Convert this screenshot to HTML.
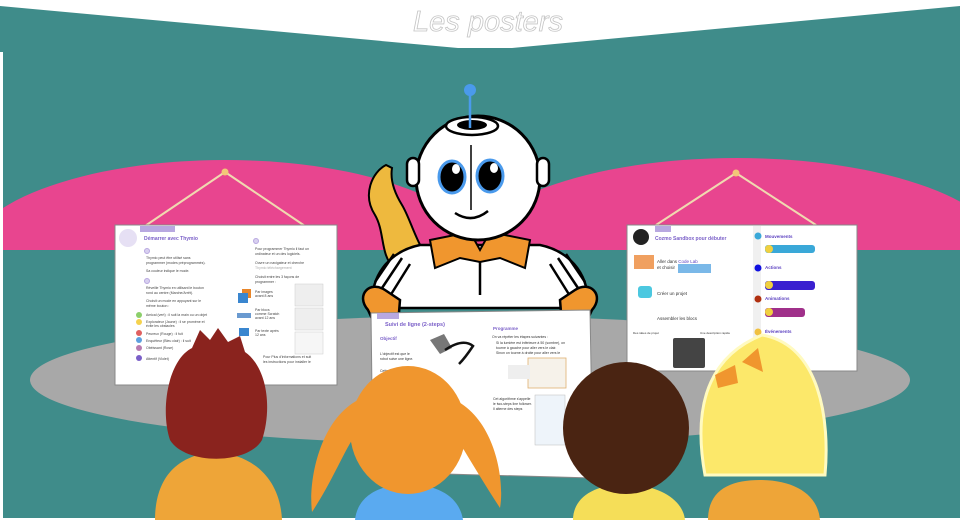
<!DOCTYPE html>
<html><head><meta charset="utf-8"><style>
html,body{margin:0;padding:0;background:#fff;width:960px;height:525px;overflow:hidden}
svg{display:block}
text{font-family:"Liberation Sans",sans-serif}
</style></head><body>
<svg width="960" height="525" viewBox="0 0 960 525" xmlns="http://www.w3.org/2000/svg">
<rect width="960" height="525" fill="#fff"/>
<polygon points="0,6 458,48 512,48 960,6 960,518 3,518 3,52 0,52" fill="#3f8c8a"/>
<text x="488" y="31" text-anchor="middle" font-family="DejaVu Serif,serif" font-style="italic" font-size="29" fill="#fff" stroke="#c4c4c4" stroke-width="0.8">Les posters</text>
<clipPath id="c1"><rect x="3" y="0" width="957" height="250"/></clipPath>
<g clip-path="url(#c1)" fill="#e8458f">
<ellipse cx="225" cy="260" rx="260" ry="100"/>
<ellipse cx="737" cy="258" rx="270" ry="100"/>
</g>
<ellipse cx="470" cy="380" rx="440" ry="64" fill="#a8a8a8"/>
<g stroke="#f0d9b0" stroke-width="2" fill="none">
<polyline points="145,226 225,172 305,226"/>
<polyline points="656,225 736,173 816,225"/>
</g>
<circle cx="225" cy="172" r="3.5" fill="#f2c878"/><circle cx="736" cy="173" r="3.5" fill="#f2c878"/>
<!-- left poster -->
<rect x="115" y="225" width="222" height="160" fill="#fff" stroke="#888" stroke-width="1"/>
<rect x="140" y="226" width="35" height="6" fill="#b8a8e0"/>
<circle cx="128" cy="238" r="9" fill="#e6e0f4"/>
<text x="144" y="240" font-size="5" fill="#7a5fc8" font-weight="bold">Démarrer avec Thymio</text>
<g font-size="3.5" fill="#444">
<text x="146" y="259">Thymio peut être utilisé sans</text><text x="146" y="264">programmer (modes préprogrammés).</text>
<text x="146" y="272">Sa couleur indique le mode.</text>
<text x="146" y="289">Réveille Thymio en utilisant le bouton</text><text x="146" y="294">rond au centre (Marche/Arrêt).</text>
<text x="146" y="302">Choisit un mode en appuyant sur le</text><text x="146" y="307">même bouton :</text>
<text x="146" y="316">Amical (vert) : il suit la main ou un objet</text>
<text x="146" y="323">Explorateur (Jaune) : il se promène et</text><text x="146" y="327">évite les obstacles</text>
<text x="146" y="335">Peureux (Rouge) : il fuit</text><text x="146" y="342">Enquêteur (Bleu clair) : il suit</text><text x="146" y="349">Obéissant (Rose)</text><text x="146" y="360">Attentif (Violet)</text>
<text x="255" y="250">Pour programmer Thymio il faut un</text><text x="255" y="255">ordinateur et un des logiciels.</text>
<text x="255" y="264">Ouvre un navigateur et cherche</text><text x="255" y="269" fill="#aaa">Thymio téléchargement</text>
<text x="255" y="278">Choisit entre les 3 façons de</text><text x="255" y="283">programmer :</text>
<text x="255" y="293">Par images</text><text x="255" y="297">avant 8 ans</text><text x="255" y="311">Par blocs</text><text x="255" y="315">comme Scratch</text><text x="255" y="319">avant 12 ans</text><text x="255" y="332">Par texte après</text><text x="255" y="336">12 ans</text><text x="263" y="358">Pour Plus d'informations et suit</text><text x="263" y="363">les instructions pour installer le</text>
</g>
<g stroke="#b8a8e0" stroke-width="1" fill="#d8d0f0"><circle cx="147" cy="251" r="2.5"/><circle cx="147" cy="281" r="2.5"/><circle cx="256" cy="241" r="2.5"/></g>
<g><circle cx="139" cy="315" r="3" fill="#8ccf6b"/><circle cx="139" cy="322" r="3" fill="#f5d24e"/><circle cx="139" cy="333" r="3" fill="#e06060"/><circle cx="139" cy="340" r="3" fill="#5da0e0"/><circle cx="139" cy="348" r="3" fill="#b87bb0"/><circle cx="139" cy="358" r="3" fill="#7a5fc8"/></g>
<rect x="242" y="289" width="9" height="9" fill="#e8862a"/><rect x="238" y="293" width="10" height="10" fill="#3a86cf"/>
<rect x="237" y="313" width="14" height="5" fill="#6a9ad0"/><rect x="239" y="328" width="10" height="8" fill="#3a86cf"/>
<rect x="295" y="284" width="28" height="22" fill="#eee" stroke="#ccc" stroke-width=".5"/><rect x="295" y="308" width="28" height="22" fill="#eee" stroke="#ccc" stroke-width=".5"/><rect x="295" y="332" width="28" height="22" fill="#f6f6f6" stroke="#ccc" stroke-width=".5"/>
<!-- right poster -->
<rect x="627" y="225" width="230" height="146" fill="#fff" stroke="#888" stroke-width="1"/>
<rect x="753" y="226" width="8" height="144" fill="#f0f0f0"/>
<rect x="655" y="226" width="16" height="6" fill="#b8a8e0"/>
<circle cx="641" cy="237" r="8" fill="#222"/>
<text x="655" y="240" font-size="5" fill="#7a5fc8" font-weight="bold">Cozmo Sandbox pour débuter</text>
<rect x="634" y="255" width="20" height="14" fill="#f0a060"/>
<g font-size="4.5" fill="#333"><text x="657" y="263">Aller dans <tspan fill="#5a3fc0">Code Lab</tspan></text><text x="657" y="269">et choisir</text><text x="657" y="295">Créer un projet</text><text x="657" y="320">Assembler les blocs</text><text x="633" y="334" font-size="3">Des idées de projet</text><text x="700" y="334" font-size="3">Une description rapide</text></g>
<rect x="678" y="264" width="33" height="9" fill="#7ab8e8"/>
<rect x="638" y="286" width="14" height="12" rx="3" fill="#4cc8e0"/>
<rect x="673" y="338" width="32" height="30" rx="2" fill="#444"/>
<g font-size="4.5" font-weight="bold" fill="#5a3fc0"><text x="765" y="238">Mouvements</text><text x="765" y="269">Actions</text><text x="765" y="300">Animations</text><text x="765" y="333">Événements</text></g>
<circle cx="758" cy="236" r="3.5" fill="#3aa8d8"/><circle cx="758" cy="268" r="3.5" fill="#1010e0"/><circle cx="758" cy="299" r="3.5" fill="#b03010"/><circle cx="758" cy="332" r="3.5" fill="#f0c040"/>
<rect x="765" y="245" width="50" height="8" rx="3" fill="#3aa8d8"/><rect x="765" y="281" width="50" height="9" rx="3" fill="#3a20d0"/><rect x="765" y="308" width="40" height="9" rx="3" fill="#a0308a"/>
<circle cx="769" cy="249" r="4" fill="#f0d040"/><circle cx="769" cy="285" r="4" fill="#f0d040"/><circle cx="769" cy="312" r="4" fill="#f0d040"/>
<!-- robot -->
<path d="M386,165 C372,172 362,195 375,215 C385,232 380,255 394,268 L430,262 C415,240 410,218 402,205 C394,192 390,180 392,168 Z" fill="#eeb93e" stroke="#000" stroke-width="2"/>
<path d="M372,308 C370,270 395,250 420,245 L540,245 C565,250 590,270 588,308 Z" fill="#fff" stroke="#000" stroke-width="2.5"/>
<g stroke="#000" stroke-width="2.5" fill="none"><path d="M402,258 L382,288"/><path d="M410,264 L390,296"/><path d="M394,254 L375,282"/><path d="M558,258 L578,288"/><path d="M550,264 L570,296"/><path d="M566,254 L585,282"/><line x1="480" y1="255" x2="480" y2="295"/></g>
<path d="M430,240 L470,232 L480,250 L490,232 L530,240 L525,268 L500,258 L480,262 L460,258 L435,268 Z" fill="#f0962e" stroke="#000" stroke-width="2"/>
<circle cx="478" cy="178" r="62" fill="#fff" stroke="#000" stroke-width="3"/>
<ellipse cx="472" cy="126" rx="26" ry="9" fill="#fff" stroke="#000" stroke-width="2.5"/><ellipse cx="472" cy="125" rx="15" ry="5" fill="#000"/>
<line x1="470" y1="92" x2="470" y2="128" stroke="#4a9aec" stroke-width="2.5"/><circle cx="470" cy="90" r="6" fill="#4a9aec"/>
<rect x="407" y="158" width="12" height="28" rx="6" fill="#fff" stroke="#000" stroke-width="2.5"/><rect x="537" y="158" width="12" height="28" rx="6" fill="#fff" stroke="#000" stroke-width="2.5"/>
<line x1="471" y1="145" x2="471" y2="210" stroke="#000" stroke-width="1.5"/>
<ellipse cx="452" cy="177" rx="13" ry="16" fill="#000" stroke="#4a9aec" stroke-width="3"/><ellipse cx="490" cy="176" rx="13" ry="16" fill="#000" stroke="#4a9aec" stroke-width="3"/>
<ellipse cx="456" cy="169" rx="4" ry="5" fill="#fff"/><ellipse cx="494" cy="168" rx="4" ry="5" fill="#fff"/>
<path d="M455,213 Q472,224 488,211" fill="none" stroke="#000" stroke-width="2.5"/>
<path d="M368,310 C355,295 370,280 385,290 L400,300 L398,325 L375,325 Z" fill="#f0962e" stroke="#000" stroke-width="2.5"/>
<path d="M592,310 C605,295 590,280 575,290 L560,300 L562,325 L585,325 Z" fill="#f0962e" stroke="#000" stroke-width="2.5"/>
<!-- center poster -->
<polygon points="371,313 590,310 593,478 373,472" fill="#fff" stroke="#888"/>
<rect x="377" y="313" width="22" height="6" fill="#b8a8e0"/>
<text x="385" y="326" font-size="5.5" fill="#7a5fc8" font-weight="bold">Suivi de ligne (2-steps)</text>
<text x="380" y="340" font-size="4.5" fill="#7a5fc8" font-weight="bold">Objectif</text>
<text x="493" y="330" font-size="4.5" fill="#7a5fc8" font-weight="bold">Programme</text>
<g font-size="3.5" fill="#333"><text x="492" y="338">On va répéter les étapes suivantes :</text><text x="496" y="344">Si la lumière est inférieure à 50 (sombre), on</text><text x="496" y="349">tourne à gauche pour aller vers le clair.</text><text x="496" y="354">Sinon on tourne à droite pour aller vers le</text><text x="380" y="355">L'objectif est que le</text><text x="380" y="360">robot suive une ligne.</text><text x="380" y="372">Cette ligne pour</text><text x="380" y="377">représenter une piste</text><text x="493" y="400">Cet algorithme s'appelle</text><text x="493" y="405">le two-steps line follower.</text><text x="493" y="410">Il alterne des steps</text></g>
<path d="M430,340 l14,-6 8,14 -12,6z" fill="#777"/><path d="M445,350 q18,-12 28,-4 q-8,12 -14,18" fill="none" stroke="#111" stroke-width="2.5"/>
<rect x="528" y="358" width="38" height="30" fill="#f6f2ea" stroke="#e0b070" stroke-width=".8"/><rect x="508" y="365" width="22" height="14" fill="#eee"/>
<rect x="535" y="395" width="30" height="50" fill="#eef4fa" stroke="#bbb" stroke-width=".5"/>
<!-- kids -->
<path d="M155,520 C155,480 175,455 215,452 C255,455 280,480 282,520 Z" fill="#eea538"/>
<path d="M170,440 C160,410 168,360 192,348 L200,330 L210,340 L218,328 L228,342 L240,336 L245,352 C268,368 272,410 262,440 C248,465 185,465 170,440 Z" fill="#8a231e"/>
<path d="M355,520 C357,500 373,485 408,484 C443,485 460,500 463,520 Z" fill="#5aaaf0"/>
<path d="M358,400 C320,420 308,480 312,512 C330,485 340,460 352,440 Z M455,400 C495,420 505,480 500,508 C485,485 470,460 458,440 Z" fill="#f0962e"/>
<ellipse cx="408" cy="430" rx="58" ry="64" fill="#f0962e"/>
<path d="M573,520 C573,500 590,485 625,484 C660,485 683,500 685,520 Z" fill="#f5de58"/>
<ellipse cx="626" cy="428" rx="63" ry="66" fill="#4a2412"/>
<path d="M708,520 C708,490 730,480 760,480 C795,480 818,495 820,520 Z" fill="#eea538"/>
<path d="M705,475 C695,420 700,360 762,335 C820,345 830,420 825,475 Z" fill="#fce86a" stroke="#fffac0" stroke-width="3"/>
<path d="M715,375 l20,-10 3,18 -20,5z M742,362 l16,-14 5,24z" fill="#f0962e"/>
</svg>
</body></html>
